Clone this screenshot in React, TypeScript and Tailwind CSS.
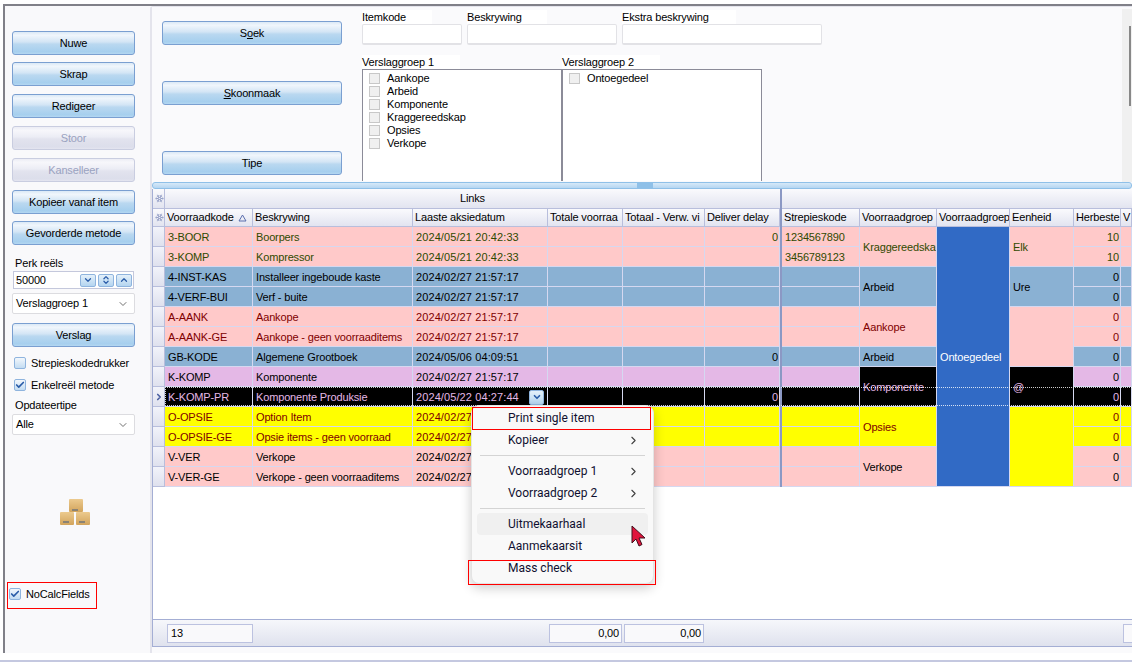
import { ChevronDown, ChevronRight, ChevronUp, Check, ChevronsUpDown, Snowflake } from "lucide-react";

const gridColumns = "grid grid-cols-[12px_88px_160px_135px_75px_82px_75px_2px_78px_77px_73px_64px_47px_11px]";

const tones = {
  olive: "bg-[#ffc9c9] text-[#2f4a00]",
  blue: "bg-[#8ab1d3] text-black",
  rose: "bg-[#ffc9c9] text-[#800000]",
  purple: "bg-[#e4b8e6] text-black",
  black: "bg-black text-[#e4b8e6]",
  yellow: "bg-[#ffff00] text-[#800000]",
  pink: "bg-[#ffc9c9] text-black",
};

type Tone = keyof typeof tones;

type Merged = { text?: string; tone: Tone; span: string };

type Row = {
  code: string;
  name: string;
  date: string;
  tone: Tone;
  delay?: string;
  barcode?: string;
  herb: string;
  group?: Merged;
  unit?: Merged;
};

const feb = "2024/02/27 21:57:17";

const rows: Row[] = [
  { code: "3-BOOR", name: "Boorpers", date: "2024/05/21 20:42:33", tone: "olive", delay: "0", barcode: "1234567890", herb: "10", group: { text: "Kraggereedska", tone: "olive", span: "row-span-2" }, unit: { text: "Elk", tone: "olive", span: "row-span-2" } },
  { code: "3-KOMP", name: "Kompressor", date: "2024/05/21 20:42:33", tone: "olive", barcode: "3456789123", herb: "10" },
  { code: "4-INST-KAS", name: "Installeer ingeboude kaste", date: feb, tone: "blue", herb: "0", group: { text: "Arbeid", tone: "blue", span: "row-span-2" }, unit: { text: "Ure", tone: "blue", span: "row-span-2" } },
  { code: "4-VERF-BUI", name: "Verf - buite", date: feb, tone: "blue", herb: "0" },
  { code: "A-AANK", name: "Aankope", date: feb, tone: "rose", herb: "0", group: { text: "Aankope", tone: "rose", span: "row-span-2" }, unit: { tone: "rose", span: "row-span-3" } },
  { code: "A-AANK-GE", name: "Aankope - geen voorraaditems", date: feb, tone: "rose", herb: "0" },
  { code: "GB-KODE", name: "Algemene Grootboek", date: "2024/05/06 04:09:51", tone: "blue", delay: "0", herb: "0", group: { text: "Arbeid", tone: "blue", span: "row-span-1" } },
  { code: "K-KOMP", name: "Komponente", date: feb, tone: "purple", herb: "0", group: { text: "Komponente", tone: "black", span: "row-span-2" }, unit: { text: "@", tone: "black", span: "row-span-2" } },
  { code: "K-KOMP-PR", name: "Komponente Produksie", date: "2024/05/22 04:27:44", tone: "black", delay: "0", herb: "0" },
  { code: "O-OPSIE", name: "Option Item", date: feb, tone: "yellow", herb: "0", group: { text: "Opsies", tone: "yellow", span: "row-span-2" }, unit: { tone: "yellow", span: "row-span-4" } },
  { code: "O-OPSIE-GE", name: "Opsie items - geen voorraad", date: feb, tone: "yellow", herb: "0" },
  { code: "V-VER", name: "Verkope", date: feb, tone: "pink", herb: "0", group: { text: "Verkope", tone: "pink", span: "row-span-2" } },
  { code: "V-VER-GE", name: "Verkope - geen voorraaditems", date: feb, tone: "pink", herb: "0" },
];

const headers = ["Voorraadkode", "Beskrywing", "Laaste aksiedatum", "Totale voorraa", "Totaal - Verw. vi", "Deliver delay"];
const headersRight = ["Strepieskode", "Voorraadgroep", "Voorraadgroep", "Eenheid", "Herbeste", "V"];

function GlossButton({ label, disabled, className = "" }: { label: React.ReactNode; disabled?: boolean; className?: string }) {
  return (
    <div
      className={
        disabled
          ? `flex h-[24px] items-center justify-center rounded-[3px] border border-[#c9cde0] bg-[linear-gradient(#ecedf5,#f7f7fb_15%,#ecedf5_45%,#e2e3ee_55%,#dcdeeb_90%,#e4e5f0)] text-[#9aa2c0] ${className}`
          : `flex h-[24px] items-center justify-center rounded-[3px] border border-[#7a9fd1] bg-[linear-gradient(#dbe9f6,#f0f6fc_15%,#d3e5f5_45%,#bad8f0_55%,#a6cfee_90%,#b4d7f1)] text-black ${className}`
      }
    >
      {label}
    </div>
  );
}

function CheckBox({ checked }: { checked?: boolean }) {
  return (
    <span className="flex h-[12px] w-[12px] shrink-0 items-center justify-center rounded-[2px] border border-[#8fb4de] bg-[linear-gradient(#f2f7fc,#c3dcf2)]">
      {checked && <Check size={10} strokeWidth={4} className="text-[#2a5ca8]" />}
    </span>
  );
}

function SpinButton({ children }: { children: React.ReactNode }) {
  return (
    <span className="flex h-[13px] w-[16px] items-center justify-center rounded-[2px] border border-[#8fb4de] bg-[linear-gradient(#e4f0fa,#b4d5f0)] text-[#2a5ca8]">
      {children}
    </span>
  );
}

function Combo({ label, className = "" }: { label: string; className?: string }) {
  return (
    <div className={`flex h-[21px] items-center justify-between rounded-[2px] border border-[#dcdce0] bg-white pl-[3px] pr-[5px] ${className}`}>
      <span>{label}</span>
      <ChevronDown size={12} className="text-[#707070]" />
    </div>
  );
}

function Sidebar() {
  return (
    <aside className="flex w-[145px] shrink-0 flex-col bg-[#f9f9fb] pl-[7px] pr-[15px] pt-[25px]">
      <GlossButton label="Nuwe" />
      <GlossButton label="Skrap" className="mt-[7px]" />
      <GlossButton label="Redigeer" className="mt-[8px]" />
      <GlossButton label="Stoor" disabled className="mt-[8px]" />
      <GlossButton label="Kanselleer" disabled className="mt-[8px]" />
      <GlossButton label="Kopieer vanaf item" className="mt-[8px]" />
      <GlossButton label="Gevorderde metode" className="mt-[7px]" />
      <div className="ml-[3px] mt-[11px] h-[15px] leading-[15px]">Perk reëls</div>
      <div className="ml-px flex h-[18px] w-[121px] items-center justify-between border border-[#c4c8dc] bg-white pl-[2px] pr-px">
        <span>50000</span>
        <span className="flex gap-[2px]">
          <SpinButton><ChevronDown size={10} strokeWidth={3} /></SpinButton>
          <SpinButton><ChevronsUpDown size={10} strokeWidth={3} /></SpinButton>
          <SpinButton><ChevronUp size={10} strokeWidth={3} /></SpinButton>
        </span>
      </div>
      <Combo label="Verslaggroep 1" className="mt-[4px]" />
      <GlossButton label="Verslag" className="mt-[9px]" />
      <label className="ml-[2px] mt-[9px] flex h-[14px] items-center gap-[5px]"><CheckBox />Strepieskodedrukker</label>
      <label className="ml-[2px] mt-[8px] flex h-[14px] items-center gap-[5px]"><CheckBox checked />Enkelreël metode</label>
      <div className="ml-[3px] mt-[6px] h-[15px] leading-[15px]">Opdateertipe</div>
      <Combo label="Alle" className="mt-px" />
      <svg width="32" height="28" viewBox="0 0 32 28" className="ml-[48px] mt-[64px]">
        <defs>
          <linearGradient id="box" x1="0" y1="0" x2="0" y2="1">
            <stop offset="0" stopColor="#ecca8e" />
            <stop offset="1" stopColor="#d2a45c" />
          </linearGradient>
        </defs>
        <rect x="9" y="0" width="14" height="13" rx="1" fill="url(#box)" />
        <rect x="0" y="13" width="14" height="13" rx="1" fill="url(#box)" />
        <rect x="16" y="13" width="14" height="13" rx="1" fill="url(#box)" />
        <rect x="12" y="10" width="6" height="2" fill="#8b8374" />
        <rect x="3" y="22" width="6" height="2" fill="#8b8374" />
        <rect x="19" y="22" width="6" height="2" fill="#8b8374" />
      </svg>
      <div className="-ml-[5px] mb-[44px] mt-auto flex h-[27px] w-[90px] items-center gap-[5px] border border-[#ff0000] pb-[3px] pl-px">
        <CheckBox checked />
        <span>NoCalcFields</span>
      </div>
    </aside>
  );
}

function FilterField({ label, labelWidth, width }: { label: string; labelWidth: string; width: string }) {
  return (
    <div className={width}>
      <div className={`h-[14px] bg-white leading-[14px] ${labelWidth}`}>{label}</div>
      <div className="h-[21px] rounded-[2px] border border-b-2 border-[#e2e2e6] bg-white" />
    </div>
  );
}

function CheckList({ label, items }: { label: string; items: string[] }) {
  return (
    <div className="w-[200px]">
      <div className="h-[14px] w-[98px] bg-white leading-[14px]">{label}</div>
      <div className="h-[112px] border border-b-0 border-[#8b8b98] bg-white pl-[6px] pt-[2px]">
        {items.map((item) => (
          <div key={item} className="flex h-[13px] items-center gap-[7px] leading-[13px]">
            <span className="h-[11px] w-[11px] shrink-0 border border-[#c8c8c8] bg-[#f0f0f0]" />
            <span>{item}</span>
          </div>
        ))}
      </div>
    </div>
  );
}

function FilterPanel() {
  return (
    <div className="flex h-[175px] bg-[#fafafc] pl-[10px]">
      <div className="flex w-[180px] shrink-0 flex-col pt-[14px]">
        <GlossButton label={<span>S<u>o</u>ek</span>} />
        <GlossButton label={<span><u>S</u>koonmaak</span>} className="mt-[36px]" />
        <GlossButton label="Tipe" className="mt-[46px]" />
      </div>
      <div className="ml-[20px] w-[460px] pt-[3px]">
        <div className="flex gap-[5px]">
          <FilterField label="Itemkode" labelWidth="w-[70px]" width="w-[100px]" />
          <FilterField label="Beskrywing" labelWidth="w-[80px]" width="w-[150px]" />
          <FilterField label="Ekstra beskrywing" labelWidth="w-[114px]" width="w-[200px]" />
        </div>
        <div className="mt-[10px] flex">
          <CheckList label="Verslaggroep 1" items={["Aankope", "Arbeid", "Komponente", "Kraggereedskap", "Opsies", "Verkope"]} />
          <CheckList label="Verslaggroep 2" items={["Ontoegedeel"]} />
        </div>
      </div>
      <div className="ml-auto mt-[2px] w-[10px] bg-[#f0f0f0]">
        <div className="ml-[7px] mt-[17px] h-[80px] w-[2px] bg-[#888888]" />
      </div>
    </div>
  );
}

function HeaderCell({ children }: { children: React.ReactNode }) {
  return (
    <div className="flex items-center overflow-hidden whitespace-nowrap border-b border-r border-[#b8bedc] bg-[linear-gradient(#fafafd,#e2e4f0)] pl-[2px]">
      {children}
    </div>
  );
}

function Cell({ tone, className = "", children }: { tone: Tone; className?: string; children?: React.ReactNode }) {
  return (
    <div className={`flex items-center overflow-hidden whitespace-nowrap border-b border-r border-[#d5d8f0] px-[3px] pt-px ${tones[tone]} ${className}`}>
      {children}
    </div>
  );
}

function DataGrid() {
  return (
    <div className="flex min-h-0 flex-1 flex-col border-l border-[#a4aed4] bg-white">
      <div className={`${gridColumns} h-[20px]`}>
        <HeaderCell><Snowflake size={9} className="text-[#8a96c0]" /></HeaderCell>
        <div className="col-span-6 flex items-center justify-center border-b border-[#b8bedc] bg-[linear-gradient(#fafafd,#e2e4f0)]">Links</div>
        <div className="bg-[#8b98c4]" />
        <div className="col-span-6 border-b border-[#b8bedc] bg-[linear-gradient(#fafafd,#e2e4f0)]" />
      </div>
      <div className={`${gridColumns} h-[18px]`}>
        <HeaderCell><Snowflake size={9} className="text-[#8a96c0]" /></HeaderCell>
        {headers.map((h, i) => (
          <HeaderCell key={h}>
            {h}
            {i === 0 && (
              <svg width="9" height="8" viewBox="0 0 9 8" className="ml-auto mr-[5px] shrink-0">
                <path d="M4.5 1 L8 7 H1 Z" fill="none" stroke="#5b6fae" />
              </svg>
            )}
          </HeaderCell>
        ))}
        <div className="bg-[#8b98c4]" />
        {headersRight.map((h, i) => (
          <HeaderCell key={h + i}>{h}</HeaderCell>
        ))}
      </div>
      <div className={`${gridColumns} relative auto-rows-[20px]`}>
        {rows.flatMap((r, i) => [
          <div key={`i${i}`} className="flex items-center justify-center border-b border-r border-[#b8bedc] bg-[linear-gradient(#f2f3fa,#dfe1ee)]">
            {r.tone === "black" && <ChevronRight size={10} strokeWidth={4} className="text-[#4a5fa0]" />}
          </div>,
          <Cell key={`c${i}`} tone={r.tone}>{r.code}</Cell>,
          <Cell key={`n${i}`} tone={r.tone}>{r.name}</Cell>,
          <Cell key={`d${i}`} tone={r.tone} className="justify-between tracking-[0.1px]">
            {r.date}
            {r.tone === "black" && (
              <span className="flex h-[15px] w-[15px] shrink-0 items-center justify-center rounded-[2px] border border-[#8fb4de] bg-[linear-gradient(#e4f0fa,#b4d5f0)] text-[#2a5ca8]">
                <ChevronDown size={10} strokeWidth={4} />
              </span>
            )}
          </Cell>,
          <Cell key={`t${i}`} tone={r.tone} />,
          <Cell key={`v${i}`} tone={r.tone} />,
          <Cell key={`e${i}`} tone={r.tone} className="justify-end pr-px">{r.delay}</Cell>,
          <div key={`s${i}`} className="bg-[#8b98c4]" />,
          <Cell key={`b${i}`} tone={r.tone}>{r.barcode}</Cell>,
          r.group && <Cell key={`g${i}`} tone={r.group.tone} className={r.group.span}>{r.group.text}</Cell>,
          i === 0 && <div key="grp2" className="row-span-13 flex items-center overflow-hidden border-b border-r border-[#d5d8f0] bg-[#316ac5] px-[3px] pt-px text-white">Ontoegedeel</div>,
          r.unit && <Cell key={`u${i}`} tone={r.unit.tone} className={r.unit.span}>{r.unit.text}</Cell>,
          <Cell key={`h${i}`} tone={r.tone} className="justify-end pr-px">{r.herb}</Cell>,
          <Cell key={`x${i}`} tone={r.tone} />,
        ])}
        <div className="pointer-events-none absolute left-[12px] right-0 top-[160px] h-[19px] border-y border-l border-dotted border-white/80" />
      </div>
      <div className="flex-1" />
      <div className={`${gridColumns} h-[28px] items-center border-y border-[#a4aed4] bg-[linear-gradient(#f6f7fb,#dfe2ee)]`}>
        <div />
        <div className="ml-[2px] flex h-[19px] items-center border border-[#bcc2e0] bg-[#f9f9fb] px-[3px]">13</div>
        <div />
        <div />
        <div className="ml-px mr-px flex h-[19px] items-center justify-end border border-[#bcc2e0] bg-[#f9f9fb] px-[2px]">0,00</div>
        <div className="ml-px mr-px flex h-[19px] items-center justify-end border border-[#bcc2e0] bg-[#f9f9fb] px-[2px]">0,00</div>
        <div />
        <div />
        <div />
        <div />
        <div />
        <div />
        <div />
        <div className="ml-[2px] h-[19px] border border-r-0 border-[#bcc2e0] bg-[#f9f9fb]" />
      </div>
    </div>
  );
}

function MenuItem({ label, arrow, hover }: { label: string; arrow?: boolean; hover?: boolean }) {
  return (
    <div className={`mx-[5px] flex h-[22px] items-center justify-between rounded-[4px] pl-[31px] pr-[8px] ${hover ? "bg-[#f0f0f0]" : ""}`}>
      <span>{label}</span>
      {arrow && <ChevronRight size={13} className="text-[#404040]" />}
    </div>
  );
}

function ContextMenu() {
  return (
    <div className="absolute left-[471px] top-[405px] w-[183px] rounded-[8px] border border-[#e4e4e4] bg-[#f9f9f9] py-[1px] font-['Roboto',sans-serif] text-[12px] tracking-normal text-[#101030] shadow-[0_4px_12px_rgba(0,0,0,0.2)]">
      <MenuItem label="Print single item" />
      <MenuItem label="Kopieer" arrow />
      <div className="mx-[8px] my-[4px] h-px bg-[#d4d4d4]" />
      <MenuItem label="Voorraadgroep 1" arrow />
      <MenuItem label="Voorraadgroep 2" arrow />
      <div className="mx-[8px] my-[4px] h-px bg-[#d4d4d4]" />
      <MenuItem label="Uitmekaarhaal" hover />
      <MenuItem label="Aanmekaarsit" />
      <MenuItem label="Mass check" />
      <div className="h-[3px]" />
    </div>
  );
}

export default function App() {
  return (
    <div className="relative h-[662px] w-[1132px] overflow-hidden bg-white font-['Liberation_Sans',sans-serif] text-[11px] tracking-[-0.15px] text-black">
      <div className="ml-[3px] mt-[4px] flex h-[649px] border-l-2 border-t-2 border-[#808088] bg-[#f9f9fb]">
        <Sidebar />
        <main className="flex min-w-0 flex-1 flex-col rounded-tl-[3px] border-l-2 border-t border-[#e4e4ec] bg-[#fafafc] pb-[6px]">
          <FilterPanel />
          <div className="relative h-[7px] shrink-0 rounded-[3px] border border-[#8fc0e8] bg-[linear-gradient(#d7e9f8,#b5d6f2)]">
            <div className="absolute left-[484px] top-0 h-[5px] w-[16px] bg-[#8fc0e8]" />
          </div>
          <DataGrid />
        </main>
      </div>
      <div className="mt-[7px] h-[2px] bg-[#c4c8e0]" />
      <ContextMenu />
      <div className="absolute left-[472px] top-[407px] h-[23px] w-[179px] border border-[#ff0000]" />
      <div className="absolute left-[468px] top-[560px] h-[25px] w-[188px] border border-[#ff0000]" />
      <svg width="16" height="22" viewBox="0 0 16 22" className="absolute left-[631px] top-[525px]">
        <path d="M1 1 L1 18 L5 14 L8 21 L11 19.5 L8 13 L14 13 Z" fill="#e0143c" stroke="#40101c" strokeWidth="1" />
      </svg>
    </div>
  );
}
